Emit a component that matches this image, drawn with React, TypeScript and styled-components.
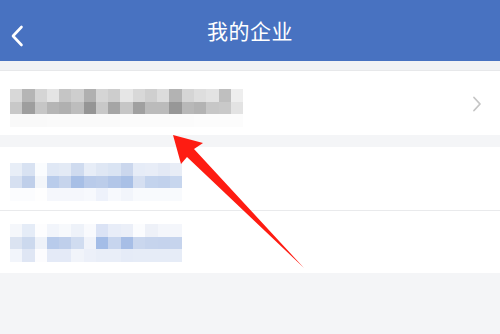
import styled, { createGlobalStyle } from 'styled-components';

const GlobalStyle = createGlobalStyle`
  html, body {
    margin: 0;
    padding: 0;
    background: #f4f5f7;
  }
  body {
    font-family: "Noto Sans CJK SC", "Noto Sans", sans-serif;
  }
`;

type Mosaic = string[][];

const companyMosaic: Mosaic = [
  ['d8', 'b5', 'd5', 'e4', 'c5', 'ce', 'b0', 'd5', 'cd', 'e6', 'd8', 'cf', 'dc', 'b3', 'd5', 'de', 'e3', 'bf', 'ee'],
  ['c8', '9e', 'c6', 'b5', 'b0', 'bd', '95', 'c8', 'a5', 'c6', 'a0', 'bb', 'bb', '97', 'b8', 'b3', 'c7', 'c9', 'e3'],
  ['f9', 'f9', 'f9', 'fa', 'fa', 'fa', 'fa', 'fa', 'fa', 'fb', 'fb', 'fb', 'fb', 'fb', 'fb', 'fc', 'fc', 'fc', 'fc'],
].map((row) => row.map((g) => `#${g}${g}${g}`));

const firstLinkMosaic: Mosaic = [
  ['e8eef7', 'd8e2f2', 'fafcfe', 'e0e8f5', 'e3eaf5', 'cfdbef', 'e7edf7', 'dfe7f4', 'dae4f3', 'cbd7ed', 'e6ecf7', 'e8edf7', 'e3e9f5', 'e8edf6'],
  ['d6e0f1', 'bfcfea', 'f3f6fa', 'b9cceb', 'c6d4ec', 'a7bfe6', 'b9cbea', 'bccdea', 'b2c6e8', 'a9c0e6', 'd5dff1', 'c3d3ed', 'c1d1ec', 'c7d6ee'],
  ['fbfcfe', 'fbfcfe', 'fefefe', 'f5f7fc', 'f5f7fc', 'f5f7fc', 'f7f9fd', 'eef2fb', 'f7f9fd', 'f2f5fb', 'f8fafd', 'f8fafd', 'f8fafd', 'f8fafd'],
].map((row) => row.map((c) => `#${c}`));

const secondLinkMosaic: Mosaic = [
  ['f5f7fb', 'e5ecf7', 'fdfdfe', 'f2f5fb', 'f7f9fc', 'eef2f9', 'f9fafd', 'dbe3f5', 'e8edf8', 'ebeff8', 'fbfcfe', 'eef1f8', 'f4f6fb', 'f4f6fb'],
  ['dbe3f1', 'ccd9ee', 'eef2f9', 'b8cbeb', 'bfcfeb', 'd0dcf0', 'f0f3fa', 'a4bde7', 'c7d5ee', 'a7bee6', 'cad7ee', 'c6d4ed', 'c5d3ed', 'c6d4ed'],
  ['f2f5fb', 'dfe6f4', 'fcfcfe', 'e4eaf7', 'e4eaf7', 'f1f4fa', 'ecf0f9', 'e9eef8', 'e9eef8', 'e5ebf7', 'e6ecf7', 'e6ecf7', 'e6ecf7', 'e6ecf7'],
].map((row) => row.map((c) => `#${c}`));

const Page = styled.div`
  width: 500px;
  height: 334px;
  position: relative;
  overflow: hidden;
  background: #f4f5f7;
`;

const Header = styled.header`
  height: 61px;
  display: flex;
  align-items: center;
  justify-content: center;
  position: relative;
  background: #4872c1;
`;

const BackButton = styled.button`
  position: absolute;
  left: 6px;
  top: 22px;
  width: 22px;
  height: 28px;
  padding: 0;
  border: none;
  background: none;
  display: flex;
  align-items: center;
  justify-content: center;
`;

const Title = styled.h1`
  margin: 0 0 2px;
  font-size: 21px;
  font-weight: 400;
  letter-spacing: 0.5px;
  color: #ffffff;
`;

const TopStrip = styled.div`
  height: 9px;
  background: #f2f3f5;
  border-bottom: 1px solid #e7e8ea;
`;

const Section = styled.section<{ $gap?: number }>`
  margin-top: ${(p) => p.$gap ?? 0}px;
  background: #ffffff;
`;

const Row = styled.div<{ $height: number; $top: number; $divider?: boolean }>`
  box-sizing: border-box;
  height: ${(p) => p.$height}px;
  display: flex;
  align-items: flex-start;
  justify-content: space-between;
  padding: ${(p) => p.$top}px 18px 0 10px;
  border-bottom: ${(p) => (p.$divider ? '1px solid #e9eaec' : 'none')};
`;

const Chevron = styled.svg`
  margin-top: 7px;
`;

const MosaicGrid = styled.div<{ $cols: number; $cell: number }>`
  display: grid;
  grid-template-columns: repeat(${(p) => p.$cols}, ${(p) => p.$cell}px);
  grid-auto-rows: 12.5px;
`;

const Cell = styled.span`
  display: block;
`;

const Arrow = styled.svg`
  position: absolute;
  left: 0;
  top: 0;
  pointer-events: none;
`;

const MosaicBlock = ({ data, cell }: { data: Mosaic; cell: number }) => (
  <MosaicGrid $cols={data[0].length} $cell={cell}>
    {data.flatMap((row, r) =>
      row.map((color, c) => <Cell key={`${r}-${c}`} style={{ background: color }} />)
    )}
  </MosaicGrid>
);

export default function App() {
  return (
    <>
      <GlobalStyle />
      <Page>
        <Header>
          <BackButton aria-label="返回">
            <svg width="14" height="22" viewBox="0 0 14 22">
              <path d="M11.5 2 L3 11 L11.5 20" fill="none" stroke="#fff" strokeWidth="2.6" strokeLinecap="round" strokeLinejoin="round" />
            </svg>
          </BackButton>
          <Title>我的企业</Title>
        </Header>
        <TopStrip />
        <Section>
          <Row $height={64} $top={18}>
            <MosaicBlock data={companyMosaic} cell={12.27} />
            <Chevron width="10" height="16" viewBox="0 0 10 16">
              <path d="M2 1.5 L8 8 L2 14.5" fill="none" stroke="#c5c5c5" strokeWidth="1.8" strokeLinecap="round" strokeLinejoin="round" />
            </Chevron>
          </Row>
        </Section>
        <Section $gap={12}>
          <Row $height={64} $top={16} $divider>
            <MosaicBlock data={firstLinkMosaic} cell={12.3} />
          </Row>
          <Row $height={62} $top={13}>
            <MosaicBlock data={secondLinkMosaic} cell={12.3} />
          </Row>
        </Section>
        <Arrow width="500" height="334" viewBox="0 0 500 334">
          <polygon
            points="173,135 203,143 194,149 304,268 187,157 181,164"
            fill="#fe1c12"
          />
        </Arrow>
      </Page>
    </>
  );
}
